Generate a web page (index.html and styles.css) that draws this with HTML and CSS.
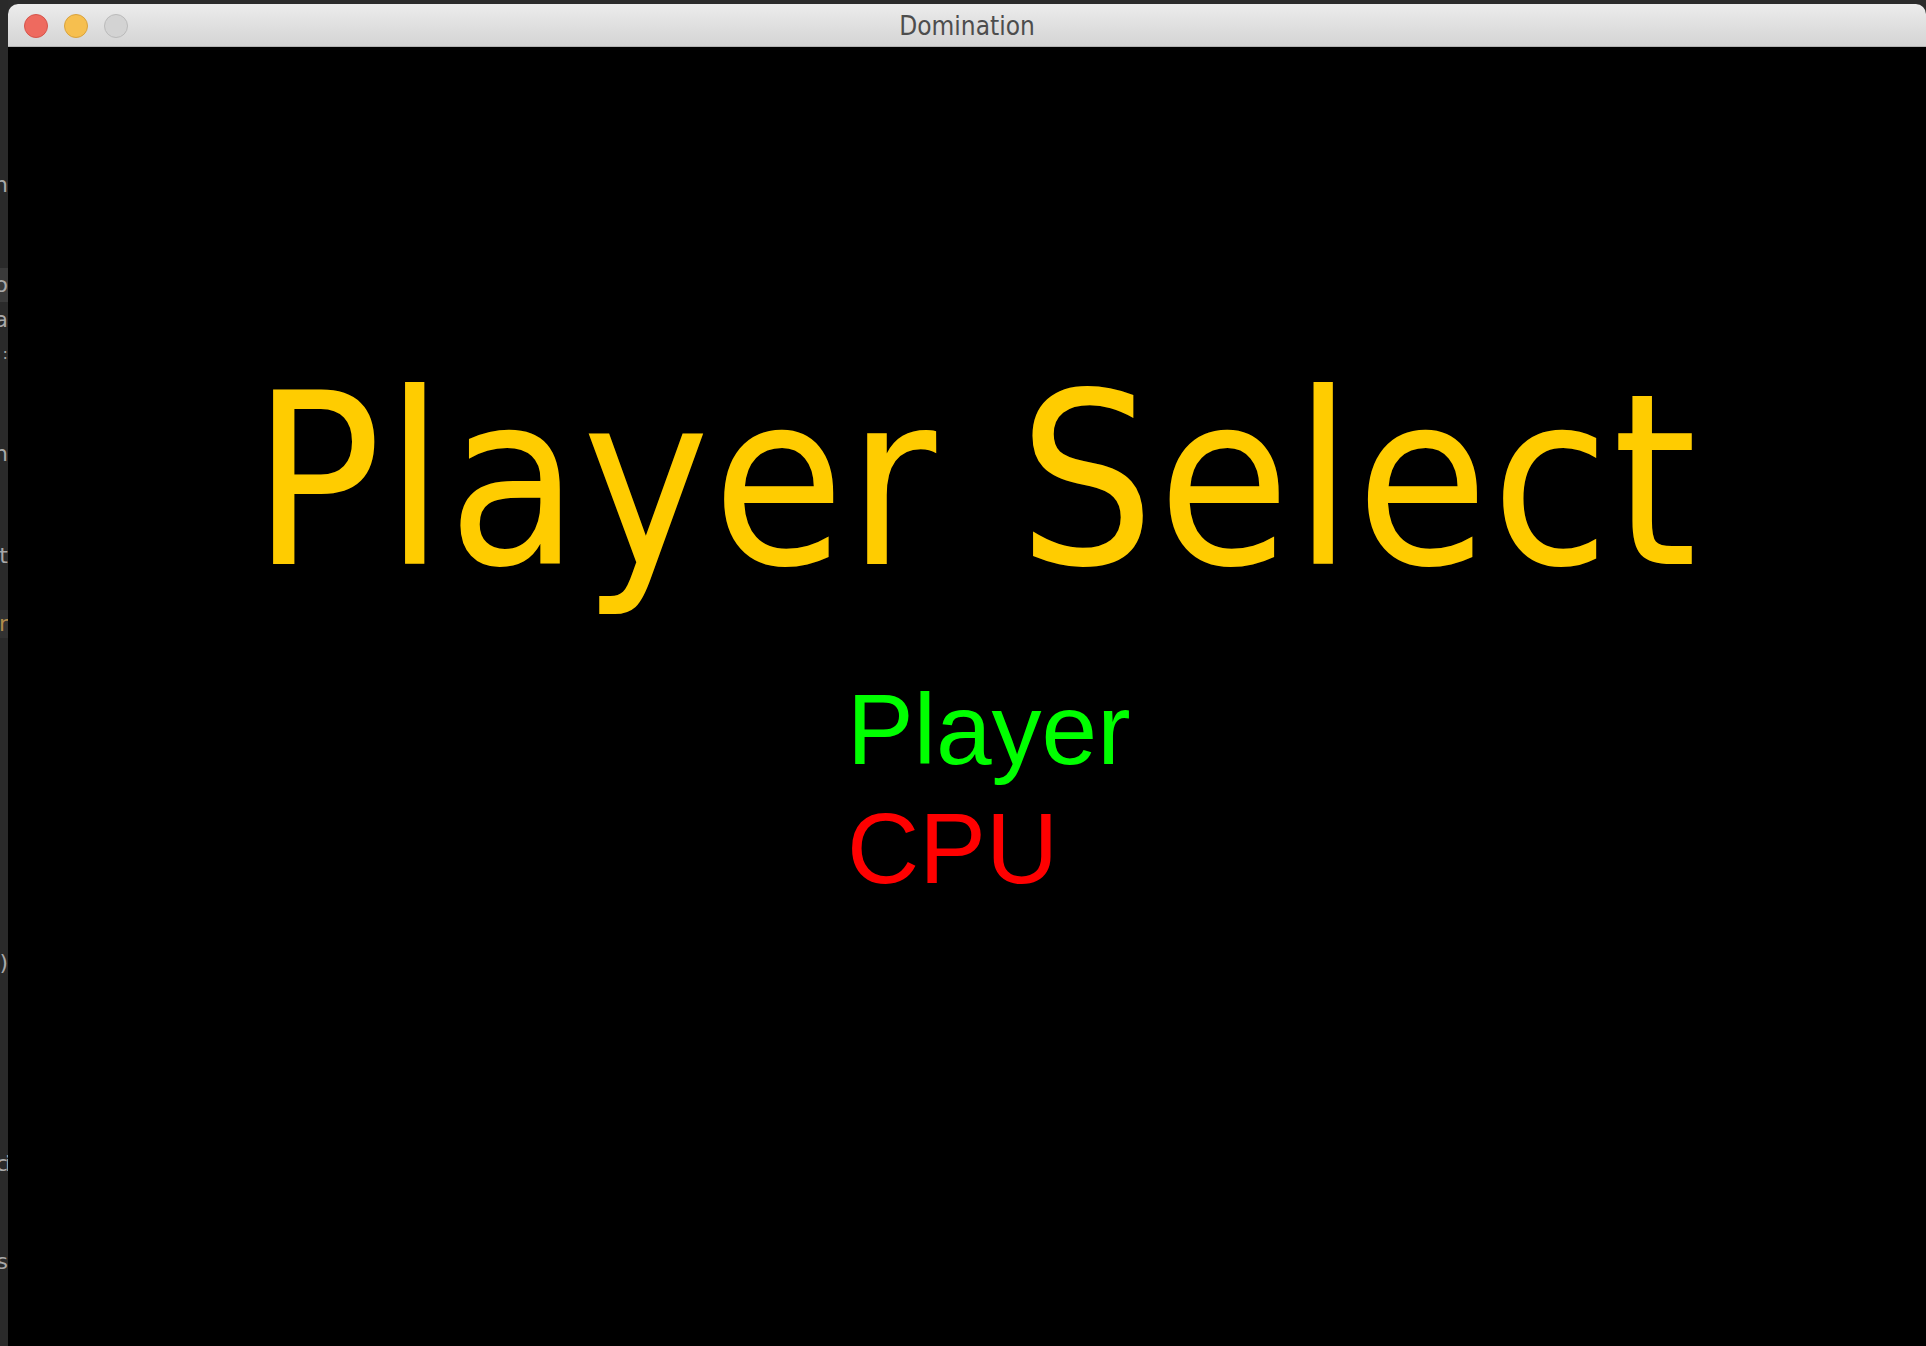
FILE: index.html
```html
<!DOCTYPE html>
<html lang="en">
<head>
<meta charset="utf-8">
<title>Domination</title>
<link rel="stylesheet" href="styles.css">
</head>
<body>
<div class="desktop">
  <div class="behind">
    <div class="frag f1">n</div>
    <div class="frag hl f2">o</div>
    <div class="frag f3">a</div>
    <div class="frag small f4">:</div>
    <div class="frag f5">n</div>
    <div class="frag f6">t</div>
    <div class="frag gold f7">r</div>
    <div class="frag f8">)</div>
    <div class="frag narrow f9">ci</div>
    <div class="frag f10">s</div>
  </div>
  <div class="window">
    <div class="titlebar">
      <div class="lights">
        <span class="light close"></span>
        <span class="light min"></span>
        <span class="light zoom"></span>
      </div>
      <div class="wintitle">Domination</div>
      <div></div>
    </div>
    <div class="content">
      <h1 class="heading">Player Select</h1>
      <ul class="options">
        <li class="opt player">Player</li>
        <li class="opt cpu">CPU</li>
      </ul>
    </div>
  </div>
</div>
</body>
</html>
```

FILE: styles.css
```css
html, body {
  margin: 0;
  padding: 0;
  height: 100%;
  overflow: hidden;
}
body {
  background: #2b2b2b;
  font-family: "DejaVu Sans", sans-serif;
}
.desktop {
  display: flex;
  height: 100vh;
}
.behind {
  width: 8px;
  flex: none;
  background: #2a2a2a;
  display: flex;
  flex-direction: column;
  overflow: hidden;
}
.frag {
  height: 24px;
  line-height: 24px;
  font-size: 22px;
  color: #a8a8a8;
  display: flex;
  align-items: center;
  justify-content: flex-end;
  white-space: nowrap;
  flex: none;
}
.frag.hl { background: #3a3a3a; height: 34px; line-height: 34px; }
.frag.gold { color: #b08a4a; background: #323232; height: 28px; line-height: 28px; }
.frag.small { font-size: 16px; }
.frag.narrow { letter-spacing: -3px; }
.f1 { margin-top: 173px; }
.f2 { margin-top: 71px; }
.f3 { margin-top: 6px; }
.f4 { margin-top: 10px; }
.f5 { margin-top: 76px; }
.f6 { margin-top: 78px; }
.f7 { margin-top: 42px; }
.f8 { margin-top: 313px; }
.f9 { margin-top: 177px; }
.f10 { margin-top: 74px; }

.window {
  flex: 1;
  margin-top: 4px;
  display: flex;
  flex-direction: column;
  border-radius: 10px 10px 0 0;
  overflow: hidden;
  background: #000;
}
.titlebar {
  height: 42px;
  flex: none;
  border-bottom: 1px solid #b4b4b4;
  background: linear-gradient(#ececec, #d4d4d4);
  display: grid;
  grid-template-columns: 1fr auto 1fr;
  align-items: center;
}
.lights {
  display: flex;
  gap: 16px;
  padding-left: 16px;
  padding-top: 2px;
}
.light {
  width: 22px;
  height: 22px;
  border-radius: 50%;
  border: 1px solid;
  display: block;
}
.light.close { background: #ee6a5f; border-color: #d5544b; }
.light.min { background: #f6bf4f; border-color: #d8a23d; }
.light.zoom { background: #d3d3d3; border-color: #bababa; }
.wintitle {
  font-family: "DejaVu Sans Condensed", "DejaVu Sans", sans-serif;
  font-stretch: condensed;
  font-size: 26px;
  color: #4d4d4d;
  padding-top: 2px;
}
.content {
  flex: 1;
  background: #000;
}
.heading {
  margin: 315px 0 0 0;
  padding-left: 244px;
  font-family: "DejaVu Sans Condensed", "DejaVu Sans", sans-serif;
  font-stretch: condensed;
  font-weight: normal;
  font-size: 239px;
  line-height: 239px;
  letter-spacing: 3px;
  word-spacing: 8px;
  color: #ffcc00;
  white-space: nowrap;
}
.options {
  list-style: none;
  margin: 69px 0 0 0;
  padding: 0 0 0 839px;
  font-family: "Liberation Sans", Arial, sans-serif;
  font-size: 100px;
  line-height: 119px;
}
.opt.player { color: #00ff00; }
.opt.cpu { color: #ff0000; }
```
